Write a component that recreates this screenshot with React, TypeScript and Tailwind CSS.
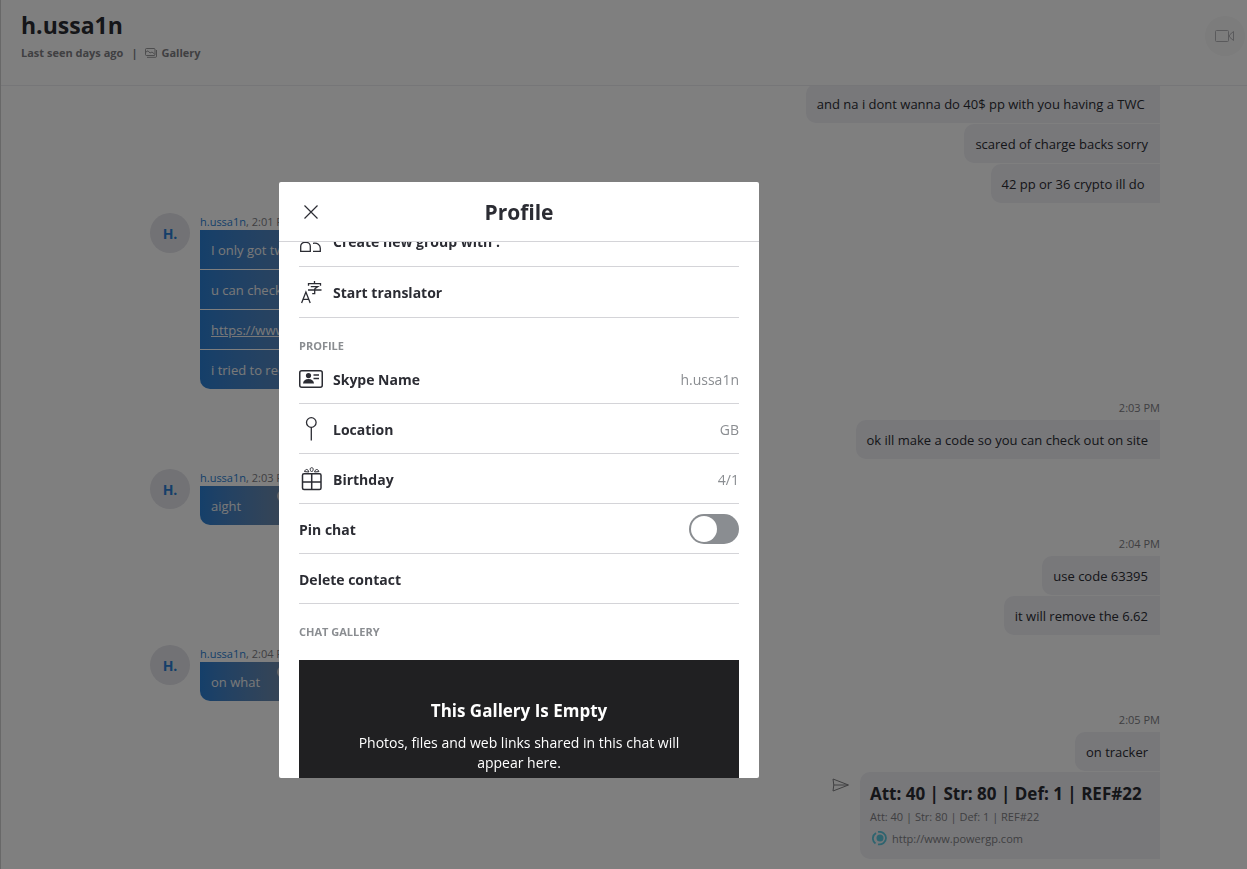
import type { ReactNode } from "react";
import clsx from "clsx";

/* ── Icons ─────────────────────────────────────────────────────────────── */

function GalleryIcon() {
  return (
    <svg width="12" height="10" viewBox="0 0 12 10" fill="none" stroke="currentColor" strokeWidth="0.8" aria-hidden="true">
      <rect x="0.5" y="0.5" width="9.500" height="7" rx="1" />
      <path d="M2 9.300h8.500a1 1 0 0 0 1-1V2" />
      <path d="M1 4l2-1.200 2 2.200L7 4l2.500 2" />
    </svg>
  );
}

function VideoIcon() {
  return (
    <svg width="20" height="14" viewBox="0 0 20 14" fill="none" stroke="currentColor" aria-hidden="true">
      <rect x="0.5" y="1.500" width="13" height="11" rx="1" />
      <path d="M18.500 2.500v9l-3.500-3a2 2 0 0 1 0-3z" />
    </svg>
  );
}

function SendIcon() {
  return (
    <svg width="18" height="14" viewBox="0 0 18 14" fill="none" stroke="currentColor" strokeLinejoin="round" aria-hidden="true">
      <path d="M1 1l15.500 6L1 13l.8-6z" />
      <path d="M1.800 7H16" />
    </svg>
  );
}

function CloseIcon() {
  return (
    <svg width="14" height="14" viewBox="0 0 14 14" fill="none" stroke="currentColor" strokeWidth="1.200" aria-hidden="true">
      <path d="M.5.5l13 13M13.500.5l-13 13" />
    </svg>
  );
}

function GroupIcon() {
  return (
    <svg width="24" height="24" viewBox="0 0 24 24" fill="none" stroke="currentColor" strokeWidth="1.300" aria-hidden="true">
      <circle cx="7" cy="7" r="3.500" />
      <circle cx="16.500" cy="7.500" r="3" />
      <path d="M1.700 22.300v-5a4 4 0 0 1 4-4h1.600a4 4 0 0 1 4 4v5z" />
      <path d="M14 14.300c4.500-.8 7.300 1.500 7.300 5v3H14" />
    </svg>
  );
}

function TranslateIcon() {
  return (
    <svg width="24" height="24" viewBox="0 0 24 24" fill="none" stroke="currentColor" strokeWidth="1.300" aria-hidden="true">
      <path d="M2.600 23L6.900 12 11.200 23M4 19.300h5.800" />
      <path d="M15.500 1v2.500M9.500 5.800V3.600h12v2.200M11.800 6.600h7l-3.300 2.500M9 10h13.500M15.700 9v4.600h-2.500" />
    </svg>
  );
}

function ContactCardIcon() {
  return (
    <svg width="24" height="24" viewBox="0 0 24 24" fill="none" aria-hidden="true">
      <rect x="0.750" y="3.750" width="22.500" height="16.500" rx="2" stroke="currentColor" strokeWidth="1.500" />
      <circle cx="9.500" cy="8.600" r="2.600" fill="currentColor" />
      <path d="M4 16.500c.3-3 2.300-4.500 5.500-4.500s5.200 1.500 5.500 4.500z" fill="currentColor" />
      <path d="M14.500 8H20M14.500 11.500H20" stroke="currentColor" strokeWidth="1.500" />
    </svg>
  );
}

function PinIcon() {
  return (
    <svg width="24" height="24" viewBox="0 0 24 24" fill="none" stroke="currentColor" strokeWidth="1.300" aria-hidden="true">
      <circle cx="12.300" cy="5.500" r="4.800" />
      <path d="M12.300 10.300V23.500" />
    </svg>
  );
}

function GiftIcon() {
  return (
    <svg width="24" height="24" viewBox="0 0 24 24" fill="none" stroke="currentColor" aria-hidden="true">
      <rect x="3.500" y="6.800" width="18.500" height="15.700" rx="1.500" strokeWidth="1.500" />
      <path d="M12.700 6.800v15.700M3.500 15h18.500" strokeWidth="1.500" />
      <path d="M9.800 5C9.300 2 6.500 1.500 5.500 4.600zM15.600 5c.5-3 3.300-3.500 4.300-.4z" />
      <path d="M12.700 5c-2-1.800-2-4.300 0-4.300s2 2.500 0 4.300z" />
    </svg>
  );
}

function SiteIcon() {
  return (
    <svg width="16" height="16" viewBox="0 0 16 16" fill="none" aria-hidden="true">
      <circle cx="8" cy="7" r="3.500" fill="#5cc8de" />
      <path d="M3.500 12.500A7 6.500 0 0 1 4 2M6 .900a6.800 6.300 0 1 1 0 12.400" stroke="#5cc8de" strokeWidth="1.800" />
    </svg>
  );
}

/* ── Chat ──────────────────────────────────────────────────────────────── */

function Incoming({ time, children }: { time: string; children: ReactNode }) {
  return (
    <div className="flex gap-2.5">
      <div className="flex size-10 shrink-0 items-center justify-center rounded-full bg-[#e4e4ea] pt-0.5 text-sm font-bold text-[#2a7fd4]">
        H.
      </div>
      <div>
        <div className="text-[11px] leading-[17px] text-[#808084]">
          <span className="text-[#2a7fd4]">h.ussa1n</span>, {time}
        </div>
        <div className="flex flex-col gap-px">{children}</div>
      </div>
    </div>
  );
}

function BlueBubble({ last, wide, reaction, children }: { last?: boolean; wide?: boolean; reaction?: boolean; children: ReactNode }) {
  return (
    <div
      className={clsx(
        "relative bg-linear-to-r from-[#2a7fd4] to-[#8a8d91] px-[11px] pt-0.5 text-[13px] leading-[37px] text-[#f2f2f2]",
        wide ? "w-60" : "w-32",
        last && "rounded-bl-[10px]",
      )}
    >
      {children}
      {reaction && <span className="absolute top-1 left-[77px] size-3 rounded-full bg-[#c8c8cc]" />}
    </div>
  );
}

function Outgoing({ time, children }: { time?: string; children: ReactNode }) {
  return (
    <div className="flex flex-col items-end">
      {time && <div className="h-[21px] text-[11px] leading-[17px] text-[#808084]">{time}</div>}
      <div className="flex flex-col items-end gap-px">{children}</div>
    </div>
  );
}

function GrayBubble({ children }: { children: ReactNode }) {
  return (
    <div className="rounded-l-[10px] bg-[#f0f0f5] pt-0.5 pr-3 pl-[11px] text-[13px] leading-[37px] whitespace-pre text-[#2b2c33]">
      {children}
    </div>
  );
}

function Chat() {
  return (
    <main className="flex h-screen flex-col border-l border-[#d0d0d0] bg-white">
      <header className="flex shrink-0 items-start justify-between border-b border-[#ededf0] pt-2.5 pr-0.5 pb-6 pl-5">
        <div>
          <h1 className="text-[23px] leading-[30px] font-bold text-[#2b2c33]">h.ussa1n</h1>
          <div className="mt-1 flex items-center text-[11px] leading-[17px] font-bold text-[#808084]">
            <span>Last seen days ago</span>
            <span className="mx-2">|</span>
            <a href="#gallery" className="flex items-center gap-1">
              <GalleryIcon />
              Gallery
            </a>
          </div>
        </div>
        <button aria-label="Video call" className="mt-1.5 flex size-10 items-center justify-center rounded-full bg-[#f8f8f8] text-[#b4b4b8]">
          <VideoIcon />
        </button>
      </header>

      <div className="flex min-h-0 flex-1 flex-col justify-end gap-2.5 overflow-hidden pr-[87px] pb-2.5 pl-[149px]">
        <Outgoing>
          <GrayBubble>{"and na i dont wanna do 40$ pp with you having a TWC "}</GrayBubble>
          <GrayBubble>scared of charge backs sorry</GrayBubble>
          <GrayBubble>{"42 pp or 36 crypto ill do "}</GrayBubble>
        </Outgoing>
        <Incoming time="2:01 PM">
          <BlueBubble wide>I only got two</BlueBubble>
          <BlueBubble wide>u can check</BlueBubble>
          <BlueBubble wide>
            <a href="#link" className="underline">https://www.powergp.com</a>
          </BlueBubble>
          <BlueBubble wide last>i tried to redeem</BlueBubble>
        </Incoming>
        <Outgoing time="2:03 PM">
          <GrayBubble>ok ill make a code so you can check out on site</GrayBubble>
        </Outgoing>
        <Incoming time="2:03 PM">
          <BlueBubble last reaction>aight</BlueBubble>
        </Incoming>
        <Outgoing time="2:04 PM">
          <GrayBubble>use code 63395</GrayBubble>
          <GrayBubble>it will remove the 6.62</GrayBubble>
        </Outgoing>
        <Incoming time="2:04 PM">
          <BlueBubble last reaction>on what</BlueBubble>
        </Incoming>
        <Outgoing time="2:05 PM">
          <GrayBubble>on tracker</GrayBubble>
          <div className="flex items-start gap-2.5">
            <button aria-label="Forward" className="mt-1.5 text-[#808084]">
              <SendIcon />
            </button>
            <a href="#powergp" className="block w-[300px] rounded-l-[10px] bg-[#f0f0f5] px-2.5 pt-2 pb-2 text-[11px] text-[#808084]">
              <strong className="block text-[17px] leading-7 text-[#2b2c33]">Att: 40 | Str: 80 | Def: 1 | REF#22</strong>
              <span className="block leading-[18px]">Att: 40 | Str: 80 | Def: 1 | REF#22</span>
              <span className="flex h-[25px] items-center gap-1 pl-0.5">
                <SiteIcon />
                <span className="pt-0.5">http://www.powergp.com</span>
              </span>
            </a>
          </div>
        </Outgoing>
      </div>
    </main>
  );
}

/* ── Profile dialog ────────────────────────────────────────────────────── */

function Row({ icon, label, value }: { icon: ReactNode; label: string; value: string }) {
  return (
    <div className="flex h-[50px] items-center gap-2.5 border-b border-[#d4d4d8]">
      {icon}
      <span className="pt-0.5 font-bold">{label}</span>
      <span className="ml-auto pt-0.5 text-[#8a8d91]">{value}</span>
    </div>
  );
}

function ActionRow({ icon, label }: { icon: ReactNode; label: string }) {
  return (
    <button className="flex h-[51px] w-full items-center gap-2.5 border-b border-[#d4d4d8] font-bold">
      {icon}
      <span className="pt-0.5">{label}</span>
    </button>
  );
}

function ProfileDialog() {
  return (
    <div className="fixed inset-0 flex justify-center bg-black/50 pt-[182px] pr-[209px] pb-[91px]">
      <section
        role="dialog"
        aria-labelledby="profile-title"
        className="flex w-full max-w-[480px] flex-col overflow-hidden rounded-xs bg-white text-sm text-[#2b2c33]"
      >
        <header className="grid h-[60px] shrink-0 grid-cols-[1fr_auto_1fr] items-center border-b border-[#d4d4d8] px-[25px]">
          <button aria-label="Close" className="justify-self-start">
            <CloseIcon />
          </button>
          <h2 id="profile-title" className="text-[21px] font-bold">Profile</h2>
        </header>

        <div className="min-h-0 flex-1 overflow-hidden px-5">
          <div className="-mt-[26px]">
            <ActionRow icon={<GroupIcon />} label="Create new group with ." />
            <ActionRow icon={<TranslateIcon />} label="Start translator" />
          </div>

          <h3 className="mt-5 text-[11px] leading-4 font-bold text-[#8a8d91]">PROFILE</h3>
          <Row icon={<ContactCardIcon />} label="Skype Name" value="h.ussa1n" />
          <Row icon={<PinIcon />} label="Location" value="GB" />
          <Row icon={<GiftIcon />} label="Birthday" value="4/1" />
          <label className="flex h-[50px] items-center justify-between border-b border-[#d4d4d8] font-bold">
            <span className="pt-0.5">Pin chat</span>
            <input type="checkbox" role="switch" className="peer sr-only" />
            <span className="flex h-[30px] w-[50px] items-center rounded-full bg-[#8a8d91] px-0.5 peer-checked:justify-end">
              <span className="size-[26px] rounded-full bg-white" />
            </span>
          </label>
          <button className="flex h-[50px] w-full items-center border-b border-[#d4d4d8] pt-0.5 font-bold">
            Delete contact
          </button>

          <h3 className="mt-5 mb-5 text-[11px] leading-4 font-bold text-[#8a8d91]">CHAT GALLERY</h3>
          <div className="bg-[#202022] px-10 pt-[39px] pb-10 text-center text-white">
            <h4 className="text-[17px] leading-6 font-bold">This Gallery Is Empty</h4>
            <p className="mt-2.5 leading-5">Photos, files and web links shared in this chat will appear here.</p>
          </div>
        </div>
      </section>
    </div>
  );
}

export default function App() {
  return (
    <div className="font-['Open_Sans','Noto_Sans',sans-serif]">
      <Chat />
      <ProfileDialog />
    </div>
  );
}
